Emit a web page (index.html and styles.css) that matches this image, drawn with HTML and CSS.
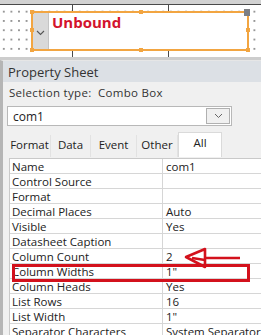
FILE: index.html
```html
<!DOCTYPE html>
<html lang="en">
<head>
  <meta charset="UTF-8">
  <title>Property Sheet</title>
  <link rel="stylesheet" href="styles.css">
</head>
<body>
  <div class="page">
    <div class="strip"></div>
    <div class="designer">
      <div class="control">
        <div class="drop">
          <svg width="9" height="6" viewBox="0 0 9 6"><path d="M1 1 L4.5 4.5 L8 1" fill="none" stroke="#555" stroke-width="1.1"/></svg>
        </div>
        <div class="unbound">Unbound</div>
        <span class="handle h-tl"></span>
        <span class="handle h-tm"></span>
        <span class="handle h-ml"></span>
        <span class="handle h-mr"></span>
        <span class="handle h-bl"></span>
        <span class="handle h-bm"></span>
        <span class="handle h-br"></span>
        <span class="move"></span>
      </div>
    </div>
    <div class="strip strip-bottom"></div>

    <section class="sheet">
      <header class="sheet-title">Property Sheet</header>
      <div class="sel-type">Selection type:&nbsp; Combo Box</div>
      <div class="combo">
        <span>com1</span>
        <div class="combo-btn">
          <svg width="9" height="6" viewBox="0 0 9 6"><path d="M1 1 L4.5 4.5 L8 1" fill="none" stroke="#666" stroke-width="1"/></svg>
        </div>
      </div>
      <nav class="tabs">
        <span class="tab t-format">Format</span>
        <span class="tab t-data">Data</span>
        <span class="tab t-event">Event</span>
        <span class="tab t-other">Other</span>
        <span class="tab active">All</span>
      </nav>
      <div class="grid">
        <div class="row"><span class="lbl">Name</span><span class="val">com1</span></div>
        <div class="row"><span class="lbl">Control Source</span><span class="val"></span></div>
        <div class="row"><span class="lbl">Format</span><span class="val"></span></div>
        <div class="row"><span class="lbl">Decimal Places</span><span class="val">Auto</span></div>
        <div class="row"><span class="lbl">Visible</span><span class="val">Yes</span></div>
        <div class="row"><span class="lbl">Datasheet Caption</span><span class="val"></span></div>
        <div class="row"><span class="lbl">Column Count</span><span class="val">2</span></div>
        <div class="row"><span class="lbl">Column Widths</span><span class="val">1"</span></div>
        <div class="row"><span class="lbl">Column Heads</span><span class="val">Yes</span></div>
        <div class="row"><span class="lbl">List Rows</span><span class="val">16</span></div>
        <div class="row"><span class="lbl">List Width</span><span class="val">1"</span></div>
        <div class="row"><span class="lbl">Separator Characters</span><span class="val">System Separator</span></div>
      </div>
    </section>

    <!-- red annotations drawn on top of the screenshot -->
    <div class="mark-box"></div>
    <svg class="mark-arrow" width="60" height="26" viewBox="0 0 60 26">
      <g fill="none" stroke="#d3111c" stroke-width="2.6" stroke-linejoin="round">
        <path d="M2 10 L21 2 L21 20 Z"/>
        <path d="M21 11 L56 11"/>
        <path d="M8 11 L21 13"/>
      </g>
    </svg>
  </div>
</body>
</html>
```

FILE: styles.css
```css
body {
  margin: 0;
  background: #f0f0f0;
  font-family: "Open Sans", "Noto Sans", sans-serif;
  color: #222;
}
.page {
  position: relative;
  width: 261px;
  height: 335px;
  overflow: hidden;
}
.strip {
  height: 4px;
  background: #d2d2d2;
  border-bottom: 1px solid #4a4a4a;
}
.strip-bottom {
  height: 3px;
  border-bottom: none;
  background: #cdcdcd;
}
.designer {
  height: 52px;
  padding-top: 6px;
  box-sizing: border-box;
  background:
    linear-gradient(#4a4a4a, #4a4a4a) 72px 0 / 1px 100% no-repeat,
    linear-gradient(#4a4a4a, #4a4a4a) 168px 0 / 1px 100% no-repeat,
    radial-gradient(circle, #7a7a7a 0.6px, transparent 0.9px) 0 2px / 7.6px 9.3px,
    #fff;
}
.control {
  position: relative;
  margin-left: 31px;
  width: 218px;
  height: 40px;
  box-sizing: border-box;
  border: 2px solid #f2a541;
  background: #fff;
  display: flex;
}
.drop {
  width: 16px;
  background: #d9d9d9;
  border-right: 1px solid #c4c4c4;
  display: flex;
  align-items: center;
  justify-content: center;
  padding-top: 4px;
  box-sizing: border-box;
}
.unbound {
  padding: 0 0 0 3px;
  font-family: "Open Sans", sans-serif;
  font-weight: 700;
  font-size: 15px;
  line-height: 19px;
  color: #d3132d;
}
.handle {
  position: absolute;
  width: 4px;
  height: 4px;
  background: #f2a541;
}
.h-tl { left: -3px; top: -3px; }
.h-tm { left: 106px; top: -3px; }
.h-ml { left: -3px; top: 15px; }
.h-mr { right: -3px; top: 15px; }
.h-bl { left: -3px; bottom: -3px; }
.h-bm { left: 106px; bottom: -3px; }
.h-br { right: -3px; bottom: -3px; }
.move {
  position: absolute;
  right: -3px;
  top: -4px;
  width: 6px;
  height: 7px;
  background: #7d7f84;
}
.sheet {
  border-left: 3px solid #b5b5b5;
  border-top: 1px solid #e6e6e6;
  background: #f0f0f0;
  height: 276px;
  box-sizing: border-box;
}
.sheet-title {
  height: 21px;
  background: #dce0e5;
  padding-left: 5px;
  font-size: 13px;
  line-height: 22px;
  color: #333;
}
.sel-type {
  padding: 2px 0 0 6px;
  height: 21px;
  box-sizing: border-box;
  font-size: 11.5px;
  letter-spacing: 0.3px;
  line-height: 18px;
  color: #333;
}
.combo {
  margin: 3px 0 0 4px;
  width: 225px;
  height: 20px;
  box-sizing: border-box;
  background: #fff;
  border: 1px solid #b8b8b8;
  display: flex;
  align-items: center;
  justify-content: space-between;
  padding-left: 5px;
  font-size: 12px;
}
.combo-btn {
  width: 24px;
  height: 16px;
  margin-right: 1px;
  box-sizing: border-box;
  border: 1px solid #b0b0b0;
  background: #f0f0f0;
  display: flex;
  align-items: center;
  justify-content: center;
}
.tabs {
  display: flex;
  margin: 6px 0 0 6px;
  height: 25px;
  align-items: flex-end;
}
.tab {
  height: 22px;
  box-sizing: border-box;
  font-size: 11.5px;
  line-height: 20px;
  text-align: center;
  color: #222;
  border-right: 1px solid #e2e2e2;
}
.t-format { width: 42px; }
.t-data { width: 40px; }
.t-event { width: 46px; }
.t-other { width: 41px; }
.tab.active {
  width: 44px;
  height: 25px;
  background: #fff;
  border: 1px solid #dadada;
  border-bottom: none;
  line-height: 19px;
}
.grid {
  margin-left: 6px;
  margin-top: 1px;
  background: #fff;
  border-top: 1px solid #c9c9c9;
  border-left: 1px solid #c9c9c9;
}
.row {
  display: flex;
  height: 14px;
  border-bottom: 1px solid #d6d6d6;
  font-size: 11.5px;
  line-height: 15px;
}
.lbl {
  width: 150px;
  padding-left: 2px;
  border-right: 1px solid #d6d6d6;
  white-space: nowrap;
  overflow: hidden;
}
.val {
  padding-left: 3px;
  white-space: nowrap;
}
.mark-box {
  position: absolute;
  left: 12px;
  top: 264px;
  width: 238px;
  height: 18px;
  box-sizing: border-box;
  border: 3px solid #d3111c;
}
.mark-arrow {
  position: absolute;
  left: 184px;
  top: 247px;
}
```
